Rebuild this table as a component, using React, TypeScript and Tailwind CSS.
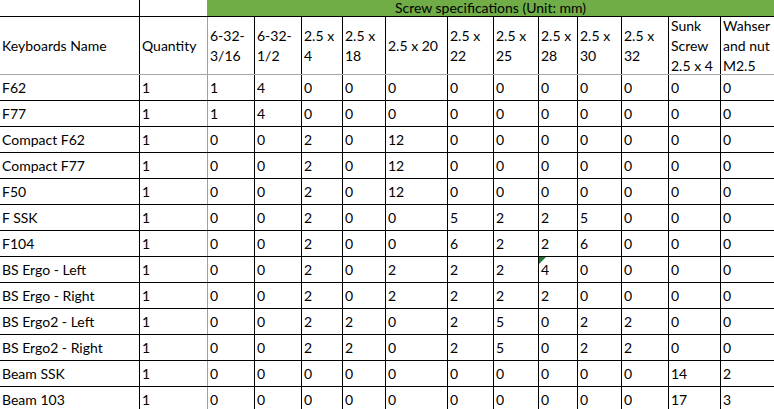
import React from "react"

// column widths incl. the 1px right border
const colW = [
  "w-[140px]",
  "w-[68px]",
  "w-[47px]",
  "w-[47px]",
  "w-[41px]",
  "w-[43px]",
  "w-[62px]",
  "w-[46px]",
  "w-[45px]",
  "w-[39px]",
  "w-[44px]",
  "w-[47px]",
  "w-[52px]",
  "w-[54px]",
]

const headers: string[][] = [
  ["Keyboards Name"],
  ["Quantity"],
  ["6-32-", "3/16"],
  ["6-32-", "1/2"],
  ["2.5 x", "4"],
  ["2.5 x", "18"],
  ["2.5 x 20"],
  ["2.5 x", "22"],
  ["2.5 x", "25"],
  ["2.5 x", "28"],
  ["2.5 x", "30"],
  ["2.5 x", "32"],
  ["Sunk", "Screw", "2.5 x 4"],
  ["Wahser", "and nut", "M2.5"],
]

const rows: (string | number)[][] = [
  ["F62", 1, 1, 4, 0, 0, 0, 0, 0, 0, 0, 0, 0, 0],
  ["F77", 1, 1, 4, 0, 0, 0, 0, 0, 0, 0, 0, 0, 0],
  ["Compact F62", 1, 0, 0, 2, 0, 12, 0, 0, 0, 0, 0, 0, 0],
  ["Compact F77", 1, 0, 0, 2, 0, 12, 0, 0, 0, 0, 0, 0, 0],
  ["F50", 1, 0, 0, 2, 0, 12, 0, 0, 0, 0, 0, 0, 0],
  ["F SSK", 1, 0, 0, 2, 0, 0, 5, 2, 2, 5, 0, 0, 0],
  ["F104", 1, 0, 0, 2, 0, 0, 6, 2, 2, 6, 0, 0, 0],
  ["BS Ergo - Left", 1, 0, 0, 2, 0, 2, 2, 2, 4, 0, 0, 0, 0],
  ["BS Ergo - Right", 1, 0, 0, 2, 0, 2, 2, 2, 2, 0, 0, 0, 0],
  ["BS Ergo2 - Left", 1, 0, 0, 2, 2, 0, 2, 5, 0, 2, 2, 0, 0],
  ["BS Ergo2 - Right", 1, 0, 0, 2, 2, 0, 2, 5, 0, 2, 2, 0, 0],
  ["Beam SSK", 1, 0, 0, 0, 0, 0, 0, 0, 0, 0, 0, 14, 2],
  ["Beam 103", 1, 0, 0, 0, 0, 0, 0, 0, 0, 0, 0, 17, 3],
]

function rightBorder(i: number) {
  if (i === 1) return "border-r border-r-[#a0a0a0]"
  if (i === 13) return ""
  return "border-r border-r-black"
}

export default function App() {
  return (
    <div className="h-[409px] w-[774px] overflow-hidden bg-white text-[14px] leading-[20px] text-black [font-family:Lato,'Liberation_Sans',sans-serif]">
      {/* merged title row */}
      <div className="flex h-[17px] border-b border-black">
        <div className={`${colW[0]} border-r border-black`} />
        <div className="w-[67px]" />
        <div className="flex-1 bg-[#70ad47] text-center leading-[16px]">Screw specifications (Unit: mm)</div>
      </div>

      {/* column headers */}
      <div className="flex h-[58px] border-b border-[#a6a6a6]">
        {headers.map((lines, i) => (
          <div
            key={i}
            className={`${colW[i]} ${rightBorder(i)} flex shrink-0 flex-col justify-center overflow-visible pl-[2px] whitespace-nowrap`}
          >
            {lines.map((l, j) => (
              <div key={j}>{l}</div>
            ))}
          </div>
        ))}
      </div>

      {rows.map((r, ri) => (
        <div key={ri} className="flex h-[26px] border-b border-black">
          {r.map((v, i) => (
            <div
              key={i}
              className={`${colW[i]} ${rightBorder(i)} relative flex shrink-0 items-end pb-[2px] pl-[2px] whitespace-nowrap`}
            >
              {ri === 7 && i === 9 && (
                <div className="absolute left-0 top-0 h-0 w-0 border-t-[7px] border-r-[7px] border-t-[#1e7b30] border-r-transparent" />
              )}
              {v}
            </div>
          ))}
        </div>
      ))}
    </div>
  )
}
